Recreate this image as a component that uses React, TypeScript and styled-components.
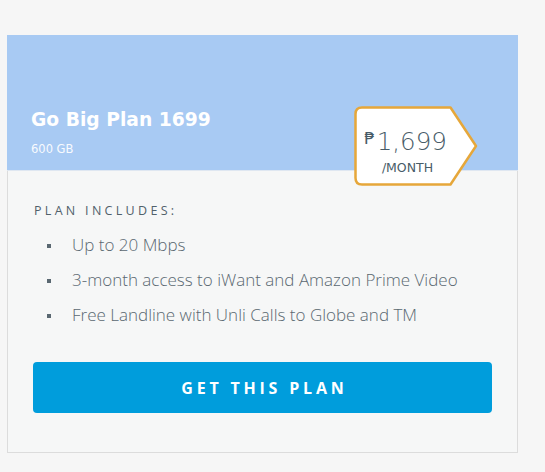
import React from "react";
import styled, { createGlobalStyle } from "styled-components";

const Global = createGlobalStyle`
  html, body {
    margin: 0;
    padding: 0;
    background: #f6f6f6;
  }
  body {
    font-family: "Open Sans", Lato, "DejaVu Sans", sans-serif;
  }
`;

const Page = styled.div`
  padding: 35px 0 0 7px;
  min-height: 472px;
  box-sizing: border-box;
`;

const Card = styled.section`
  position: relative;
  width: 511px;
  box-sizing: border-box;
  background: #f6f7f7;
  border: 1px solid #dcdcdc;
  border-top: none;
`;

const Header = styled.header`
  height: 136px;
  box-sizing: border-box;
  margin: 0 -1px;
  background: #a8caf3;
  border-bottom: 1px solid #dfe7f1;
  display: flex;
  flex-direction: column;
  justify-content: flex-end;
  padding: 0 0 14px 24px;
  color: #fff;
  font-family: "DejaVu Sans", sans-serif;
`;

const Title = styled.h2`
  margin: 0;
  font-size: 18.7px;
  line-height: 24px;
  font-weight: 700;
`;

const Sub = styled.div`
  margin-top: 10px;
  font-size: 11.5px;
  line-height: 14px;
  opacity: 0.92;
`;

const Tag = styled.div`
  position: absolute;
  left: 346px;
  top: 71px;
  width: 124px;
  height: 80px;
  color: #485c68;
  font-family: "DejaVu Sans", sans-serif;
`;

const TagShape = styled.svg`
  position: absolute;
  inset: 0;
`;

const TagText = styled.div`
  position: relative;
  width: 97px;
  height: 80px;
  padding: 22px 0 0 6px;
  box-sizing: border-box;
  display: flex;
  flex-direction: column;
  align-items: center;
`;

const Amount = styled.div`
  display: flex;
  align-items: flex-start;
  font-size: 24.5px;
  line-height: 28px;
  font-weight: 300;
`;

const Peso = styled.span`
  font-size: 16.5px;
  line-height: 16.5px;
  font-weight: 400;
  margin: 3px 2px 0 0;
`;

const Per = styled.div`
  margin-top: 4px;
  padding-left: 4px;
  font-size: 12.5px;
  line-height: 16px;
  font-weight: 400;
`;

const Body = styled.div`
  padding: 32px 25px 39px 25px;
`;

const Includes = styled.h3`
  margin: 0 0 0 1px;
  font-size: 12.5px;
  line-height: 16px;
  font-weight: 400;
  letter-spacing: 3.3px;
  color: #51616b;
`;

const List = styled.ul`
  margin: 15px 0 0 0;
  padding: 0;
  list-style: none;
  display: flex;
  flex-direction: column;
  gap: 13px;
`;

const Item = styled.li`
  display: flex;
  align-items: center;
  font-size: 17px;
  line-height: 22px;
  font-weight: 300;
  color: #5a6871;
  &::before {
    content: "";
    width: 4px;
    height: 4px;
    background: #5a6871;
    margin: 1px 21px 0 14px;
  }
`;

const Button = styled.button`
  display: block;
  width: 100%;
  height: 51px;
  margin-top: 36px;
  padding: 0 0 0 3.8px;
  border: none;
  border-radius: 4px;
  background: #009ddc;
  color: #fff;
  font-family: "Open Sans", sans-serif;
  font-size: 16px;
  font-weight: 700;
  letter-spacing: 3.8px;
  cursor: pointer;
`;

export default function App() {
  return (
    <>
      <Global />
      <Page>
        <Card>
          <Header>
            <Title>Go Big Plan 1699</Title>
            <Sub>600 GB</Sub>
          </Header>
          <Tag>
            <TagShape width="124" height="80" viewBox="0 0 124 80">
              <path
                d="M 8 1.5 H 96.5 L 122 40 L 96.5 78.5 H 8 Q 1.5 78.5 1.5 72 V 8 Q 1.5 1.5 8 1.5 Z"
                fill="#fff"
                stroke="#e6a73a"
                strokeWidth="2.5"
                strokeLinejoin="round"
              />
            </TagShape>
            <TagText>
              <Amount>
                <Peso>₱</Peso>1,699
              </Amount>
              <Per>/MONTH</Per>
            </TagText>
          </Tag>
          <Body>
            <Includes>PLAN INCLUDES:</Includes>
            <List>
              <Item>Up to 20 Mbps</Item>
              <Item>3-month access to iWant and Amazon Prime Video</Item>
              <Item>Free Landline with Unli Calls to Globe and TM</Item>
            </List>
            <Button>GET THIS PLAN</Button>
          </Body>
        </Card>
      </Page>
    </>
  );
}
